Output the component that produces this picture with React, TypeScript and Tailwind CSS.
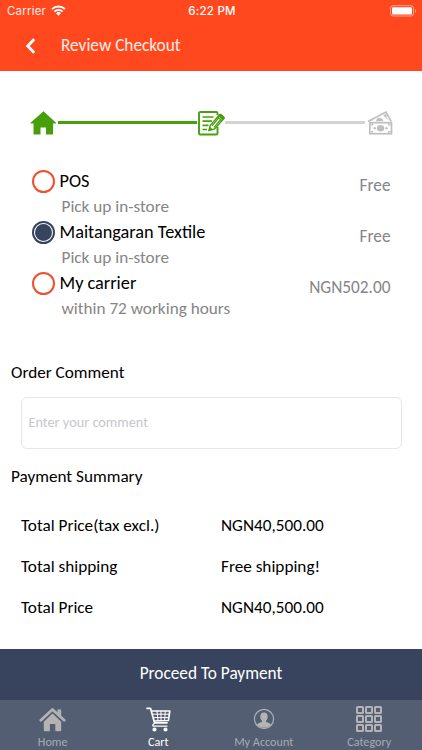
import React from "react";

type Carrier = {
  id: string;
  name: string;
  delay: string;
  price: string;
};

const CARRIERS: Carrier[] = [
  { id: "pos", name: "POS", delay: "Pick up in-store", price: "Free" },
  { id: "textile", name: "Maitangaran Textile", delay: "Pick up in-store", price: "Free" },
  { id: "carrier", name: "My carrier", delay: "within 72 working hours", price: "NGN502.00" },
];

const TOTALS = [
  { label: "Total Price(tax excl.)", value: "NGN40,500.00" },
  { label: "Total shipping", value: "Free shipping!" },
  { label: "Total Price", value: "NGN40,500.00" },
];

function StatusBar() {
  return (
    <div className="flex h-5 items-center justify-between pt-[3px] pr-[5px] pl-[7px] font-['Inter',sans-serif] text-[11.5px] text-white">
      <div className="flex flex-1 items-center gap-[5px]">
        <span className="tracking-[0.2px] text-white/90">Carrier</span>
        <svg className="-mt-[2px]" width="15" height="11" viewBox="0 0 15 11" fill="none" stroke="currentColor" strokeWidth="2">
          <path d="M1 4.1a9.3 9.3 0 0 1 13 0" />
          <path d="M3.4 6.6a5.8 5.8 0 0 1 8.2 0" />
          <path d="M7.5 10.8 5 8.3a3.5 3.5 0 0 1 5 0Z" fill="currentColor" stroke="none" />
        </svg>
      </div>
      <span className="font-medium tracking-[0.25px]">6:22 PM</span>
      <div className="-mt-[2px] flex flex-1 justify-end">
        <svg width="27" height="12" viewBox="0 0 27 12">
          <rect x="0.5" y="0.7" width="23" height="10.3" rx="2.5" fill="none" stroke="#fff" strokeOpacity="0.5" />
          <rect x="2" y="2.2" width="20" height="7.3" rx="1" fill="#fff" />
          <path d="M25 4v4c1.6-.6 1.6-3.4 0-4Z" fill="#fff" fillOpacity="0.5" />
        </svg>
      </div>
    </div>
  );
}

function Header() {
  return (
    <header className="h-[71px] bg-[#ff481e]">
      <StatusBar />
      <div className="flex h-[51px] items-center pl-[26px] text-white">
        <svg width="9" height="16" viewBox="0 0 9 16" fill="none" stroke="currentColor" strokeWidth="2.8">
          <path d="M8.2 1.2 1.8 8l6.4 6.8" />
        </svg>
        <h1 className="ml-[26px] text-[17.3px] text-white/90">Review Checkout</h1>
      </div>
    </header>
  );
}

function Steps() {
  return (
    <div className="flex h-7 items-center pr-[29px] pl-[30px]">
      <svg width="26" height="24" viewBox="0 0 26 24" fill="#47a00b">
        <path d="M13.5.2.5 11.7v.8h3v11h7v-7H16v7h7v-11h3v-.8Z" />
      </svg>
      <div className="-mt-[2px] ml-[2px] h-[3px] w-[139px] bg-[#47a00b]" />
      <svg className="ml-[1px]" width="27" height="25" viewBox="0 0 27 25" fill="none" stroke="#47a00b">
        <path d="M19.5 16v6.2a1.3 1.3 0 0 1-1.3 1.3H2.3A1.3 1.3 0 0 1 1 22.2V2.3A1.3 1.3 0 0 1 2.3 1h15.9a1.3 1.3 0 0 1 1.3 1.3V4" strokeWidth="1.9" />
        <path d="M4.5 6h11M4.5 10.2H14M4.5 14.3h6M4.5 18.5H9" strokeWidth="1.7" />
        <path d="m11 19.5 1.2-5L21.500 3.700c.8-.8 5.300 2.600 4.500 3.700l-9.300 10.500Z" fill="#fff" strokeWidth="1.5" />
        <path d="m14 14.800 7-8.300M16 16.500l7.300-8.500M19.500 6l4.500 3.700" strokeWidth="1.2" />
        <path d="m20.500 4.900 1-1.200c.8-.8 5.300 2.600 4.500 3.700l-1 1.200ZM11 19.500l.8-3 2.200 1.700Z" fill="#47a00b" strokeWidth="1" />
      </svg>
      <div className="-mt-[2px] h-[3px] w-[140px] bg-[#d3d3d3]" />
      <svg className="ml-auto" width="26" height="24" viewBox="0 0 26 24" fill="none" stroke="#bfbfbf">
        <path d="M1 10.500 19 1l5.200 9.500" strokeWidth="1.6" />
        <path d="m5.500 9.500-.5-1M16.500 3.800l4 4.500" strokeWidth="1" />
        <path d="M9 10.200c.5-5 6.500-4.500 7.500 0Z" fill="#bfbfbf" stroke="none" />
        <circle cx="18.5" cy="4.7" r="1.4" fill="#bfbfbf" stroke="none" />
        <rect x="2.8" y="11.7" width="21.7" height="11" strokeWidth="1.7" />
        <ellipse cx="13.6" cy="17.2" rx="3.7" ry="3.3" fill="#bfbfbf" stroke="none" />
        <circle cx="7.8" cy="17.2" r="1.2" fill="#bfbfbf" stroke="none" />
        <circle cx="19.5" cy="17.2" r="1.2" fill="#bfbfbf" stroke="none" />
        <path d="M5.500 12v2h-2M21.700 12v2h2.500M5.500 22.500v-2h-2M21.700 22.500v-2h2.500" strokeWidth="1.2" />
      </svg>
    </div>
  );
}

function Radio({ checked }: { checked: boolean }) {
  if (checked) {
    return (
      <span className="flex size-[23px] items-center justify-center rounded-full border-2 border-[#38445e]">
        <span className="size-[17px] rounded-full bg-[#38445e]" />
      </span>
    );
  }
  return <span className="size-[23px] rounded-full border-2 border-[#f04e2c]" />;
}

function HomeIcon() {
  return (
    <svg width="27" height="25" viewBox="0 0 27 25" fill="#b3b3b3">
      <path d="M1.800 13.200 13.500 2.400l11.700 10.800" fill="none" stroke="#b3b3b3" strokeWidth="2.7" strokeLinecap="round" strokeLinejoin="round" />
      <path d="M18.500 2.500h3.700v7.300l-3.700-3.400Z" />
      <path d="m13.500 6.500 8.700 8.200v8.600a1 1 0 0 1-1 1h-4.900v-7.200h-5.400v7.200H5.800a1 1 0 0 1-1-1v-8.600Z" />
    </svg>
  );
}

function CartIcon() {
  return (
    <svg width="26" height="26" viewBox="0 0 26 26" fill="none" stroke="#fff" strokeWidth="1.6" strokeLinecap="round" strokeLinejoin="round">
      <path d="M2 2.300h3.500l4 14.500h12.500M7 5h17.800l-1.400 9.500L9.200 15" strokeWidth="1.7" />
      <path d="M7.800 8.200h16M8.800 11.600h14.800M12 5l1 9.500M16 5v9.500M20.300 5l-.7 9.500" strokeWidth="1" />
      <path d="M9.500 17.300c-3.500 2.700-.8 2.900 0 2.900h12.500" strokeWidth="1.3" />
      <circle cx="9.5" cy="23.5" r="1.3" fill="#fff" />
      <circle cx="20.5" cy="23.5" r="1.3" fill="#fff" />
    </svg>
  );
}

function AccountIcon() {
  return (
    <svg width="22" height="22" viewBox="0 0 22 22">
      <circle cx="11" cy="11" r="9.6" fill="none" stroke="#aaafb6" strokeWidth="1.2" />
      <ellipse cx="11" cy="8.7" rx="3.7" ry="4.3" fill="#b3b3b3" />
      <path d="M9 11.500h4v2.300l4 1.700c.8.400.9 1.300.3 1.900a9.300 9.300 0 0 1-12.600 0c-.6-.6-.5-1.500.3-1.900l4-1.700Z" fill="#b3b3b3" />
    </svg>
  );
}

function CategoryIcon() {
  return (
    <div className="grid grid-cols-3 gap-px">
      {Array.from({ length: 9 }, (_, i) => (
        <span key={i} className="size-2 rounded-[1.5px] border-2 border-[#b3b3b3]" />
      ))}
    </div>
  );
}

const TABS = [
  { label: "Home", icon: <HomeIcon /> },
  { label: "Cart", icon: <CartIcon />, active: true },
  { label: "My Account", icon: <AccountIcon /> },
  { label: "Category", icon: <CategoryIcon /> },
];

export default function App() {
  const [selected, setSelected] = React.useState("textile");

  return (
    <div className="flex h-[750px] w-[422px] flex-col overflow-hidden bg-white font-['Carlito','Lato',sans-serif] text-black">
      <Header />

      <main className="flex-1 pt-[38px]">
        <Steps />

        <div className="mt-[33px]">
          {CARRIERS.map((c) => (
            <button
              key={c.id}
              onClick={() => setSelected(c.id)}
              className="flex h-[51px] w-full px-[31.5px] text-left"
            >
              <Radio checked={c.id === selected} />
              <span className="ml-[5px] flex flex-col">
                <span className="h-[23px] text-[18.3px] leading-[23px]">{c.name}</span>
                <span className="ml-[2px] h-7 text-[17.2px] leading-[28px] text-[#858585]">{c.delay}</span>
              </span>
              <span className="ml-auto pt-[5px] text-[17.3px] leading-[22px] text-[#858585]">{c.price}</span>
            </button>
          ))}
        </div>

        <h2 className="mt-[38px] ml-[11px] h-6 text-[17.2px] leading-6">Order Comment</h2>
        <input
          className="mt-[12px] ml-[20.5px] block h-[52px] w-[381px] rounded-[6px] border border-[#e7e7e7] px-[7px] pb-[2px] text-[14.3px] outline-none placeholder:text-[#c6c6cb]"
          placeholder="Enter your comment"
        />
        <h2 className="mt-[16px] ml-[11px] h-6 text-[17.2px] leading-6">Payment Summary</h2>

        <dl className="mt-[16px] text-[17.2px]">
          {TOTALS.map((t) => (
            <div key={t.label} className="flex h-[41px] items-center pl-[21px]">
              <dt className="w-[200px]">{t.label}</dt>
              <dd>{t.value}</dd>
            </div>
          ))}
        </dl>
      </main>

      <button className="h-[51px] bg-[#38445e] pb-px text-[17.3px] text-white">Proceed To Payment</button>

      <nav className="grid h-[50px] grid-cols-4 bg-[#535e72]">
        {TABS.map((tab) => (
          <div
            key={tab.label}
            className={`flex flex-col items-center pt-[6px] text-[12.2px] leading-[14px] ${
              tab.active ? "text-white" : "text-[#a5aab3]"
            }`}
          >
            <span className="flex h-[26px] items-center">{tab.icon}</span>
            <span className="mt-[3px]">{tab.label}</span>
          </div>
        ))}
      </nav>
    </div>
  );
}
